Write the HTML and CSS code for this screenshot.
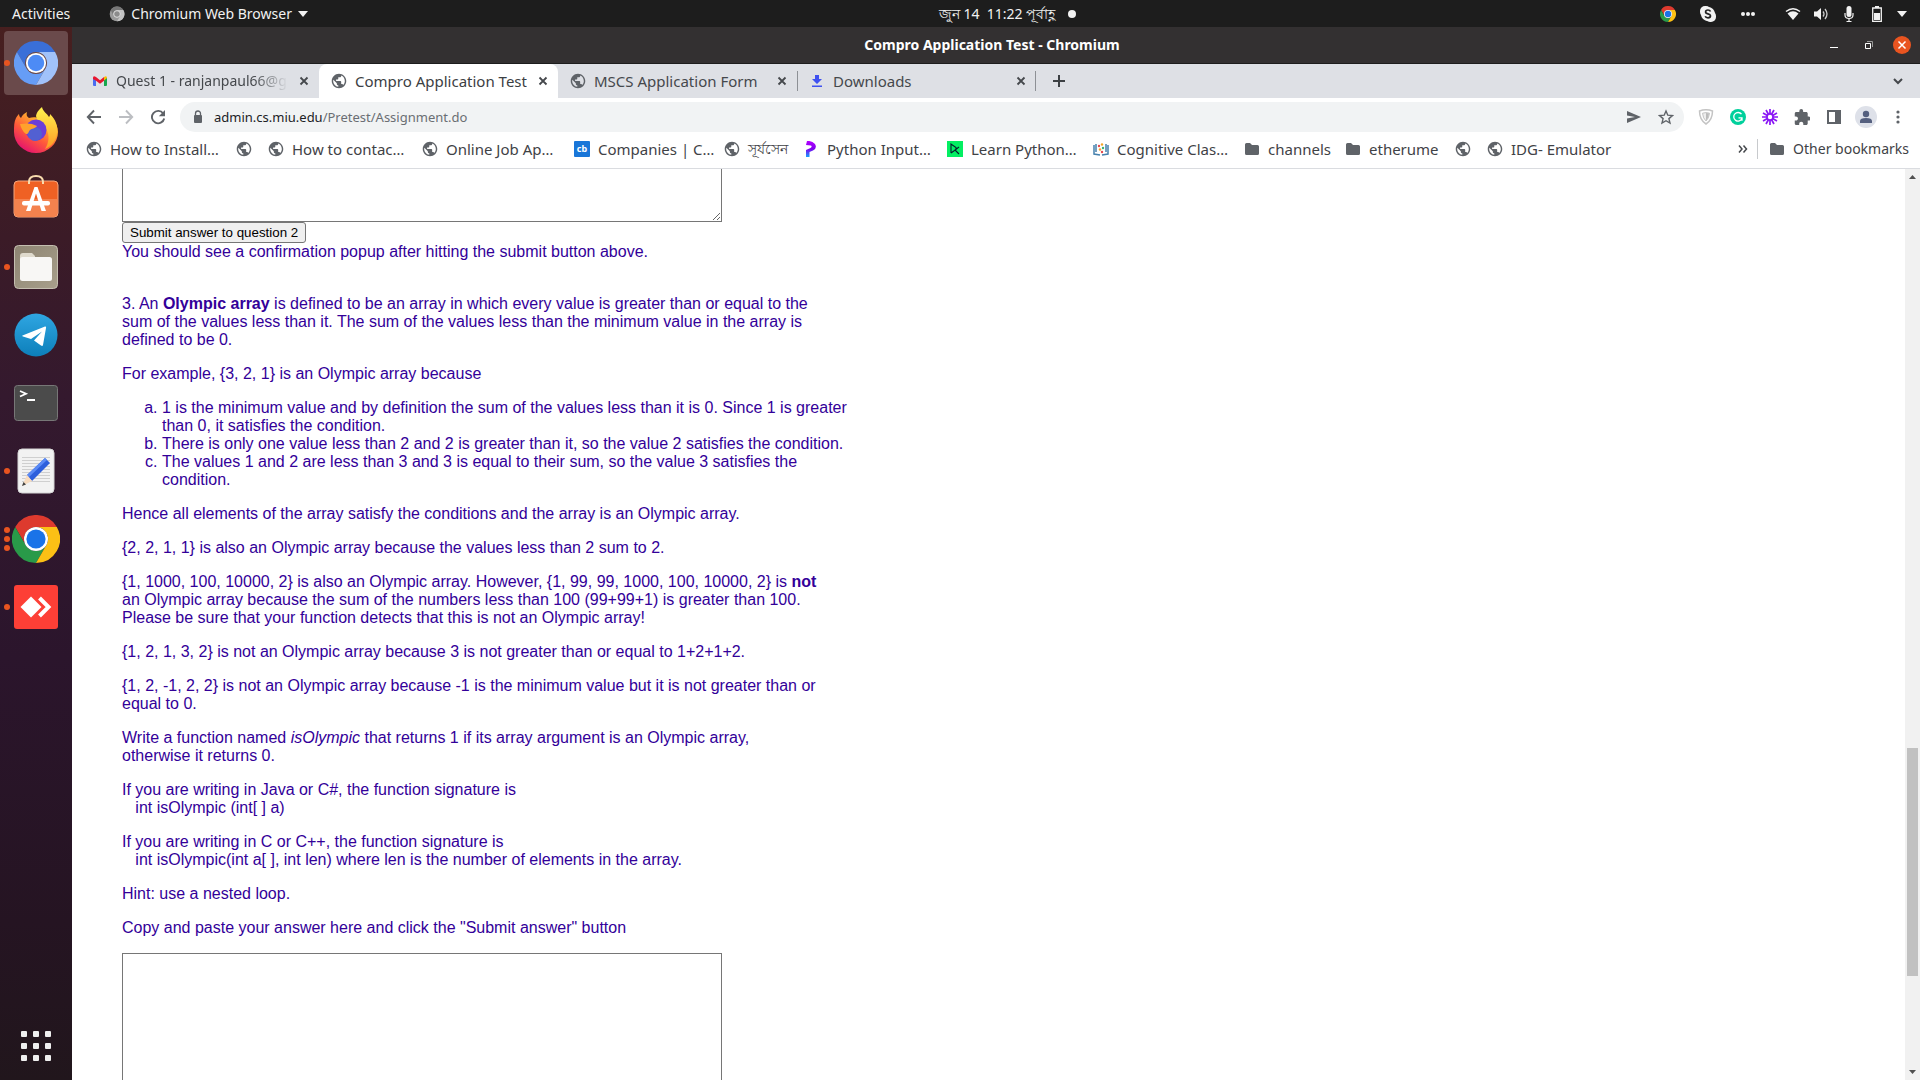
FILE: index.html
```html
<!DOCTYPE html>
<html lang="en">
<head>
<meta charset="utf-8">
<title>Compro Application Test - Chromium</title>
<link rel="stylesheet" href="styles.css">
</head>
<body>
<svg class="defs" aria-hidden="true">
  <defs>
    <linearGradient id="g-tg" x1="0" y1="0" x2="0" y2="1"><stop offset="0" stop-color="#2fa6e2"/><stop offset="1" stop-color="#0d7fba"/></linearGradient>
    <linearGradient id="g-fox" x1="1" y1="0" x2=".3" y2="1"><stop offset="0" stop-color="#fff04a"/><stop offset=".3" stop-color="#ffb82c"/><stop offset=".65" stop-color="#ff5a3a"/><stop offset="1" stop-color="#e5126f"/></linearGradient>
    <linearGradient id="g-tail" x1="0" y1="0" x2="0" y2="1"><stop offset="0" stop-color="#fff44f"/><stop offset="1" stop-color="#ff9a24"/></linearGradient>
    <linearGradient id="g-files" x1="0" y1="0" x2="1" y2="1"><stop offset="0" stop-color="#8d8472"/><stop offset="1" stop-color="#a89f8b"/></linearGradient>
    <linearGradient id="g-py" x1="0" y1="0" x2="0" y2="1"><stop offset="0" stop-color="#b400ff"/><stop offset=".5" stop-color="#8000ee"/><stop offset="1" stop-color="#13a2ff"/></linearGradient>
  </defs>
  <symbol id="globe" viewBox="1 1 22 22"><path fill="#5f6368" d="M12 2C6.480 2 2 6.480 2 12s4.480 10 10 10 10-4.480 10-10S17.520 2 12 2zM11 19.930C7.050 19.440 4 16.080 4 12c0-.62.08-1.210.21-1.790L9 15v1c0 1.100.9 2 2 2zM17.900 17.390C17.640 16.580 16.900 16 16 16h-1v-3c0-.55-.45-1-1-1H8v-2h2c.55 0 1-.45 1-1V7h2c1.100 0 2-.9 2-2v-.41c2.930 1.190 5 4.060 5 7.410 0 2.080-.8 3.970-2.100 5.390z"/></symbol>
  <symbol id="folder" viewBox="0 0 16 16"><path fill="#5f6368" d="M1 3.500q0-1.500 1.500-1.500H6l2 2h5.500Q15 4 15 5.500v7q0 1.500-1.500 1.500h-11Q1 14 1 12.500z"/></symbol>
  <symbol id="close" viewBox="0 0 16 16"><path d="M4.500 4.500l7 7m0-7l-7 7" stroke="#45484c" stroke-width="1.800" fill="none"/></symbol>
  <symbol id="chrome" viewBox="0 0 48 48">
    <path fill="#dd3a2e" d="M24 12H44.800A24 24 0 0 0 3.200 12L13.600 30A12 12 0 0 1 24 12z"/>
    <path fill="#299a49" d="M13.600 30L3.200 12A24 24 0 0 0 24 48L34.400 30A12 12 0 0 1 13.600 30z"/>
    <path fill="#fcc015" d="M34.400 30L24 48A24 24 0 0 0 44.800 12H24A12 12 0 0 1 34.400 30z"/>
    <circle cx="24" cy="24" r="12" fill="#fff"/><circle cx="24" cy="24" r="9.600" fill="#1a73e8"/>
  </symbol>
  <symbol id="chromium" viewBox="0 0 48 48">
    <path fill="#3a6fd8" d="M24 12H44.800A24 24 0 0 0 3.200 12L13.600 30A12 12 0 0 1 24 12z"/>
    <path fill="#669df6" d="M13.600 30L3.200 12A24 24 0 0 0 24 48L34.400 30A12 12 0 0 1 13.600 30z"/>
    <path fill="#a1c2fa" d="M34.400 30L24 48A24 24 0 0 0 44.800 12H24A12 12 0 0 1 34.400 30z"/>
    <circle cx="24" cy="24" r="11" fill="#fff"/><circle cx="24" cy="24" r="9" fill="#4d8bf5"/>
  </symbol>
</svg>

<div class="desktop">
  <header class="topbar">
    <div class="topbar-left">
      <button class="top-btn">Activities</button>
      <button class="top-btn app-menu">
        <svg width="16" height="16" viewBox="0 0 48 48"><circle cx="24" cy="24" r="22" fill="#9a9a9a"/><path fill="#777" d="M24 12H43A22 22 0 0 0 5 12L14 30A12 12 0 0 1 24 12z"/><path fill="#c2c2c2" d="M34 30L24 46A22 22 0 0 0 43 12H24z"/><circle cx="24" cy="24" r="10" fill="#8b8b8b" stroke="#ddd" stroke-width="3"/></svg>
        <span>Chromium Web Browser</span>
        <svg width="10" height="6" viewBox="0 0 10 6"><path fill="#f2f2f2" d="M0 0h10L5 6z"/></svg>
      </button>
    </div>
    <button class="top-btn clock"><span>জুন 14&nbsp; 11:22 পূর্বাহ্ণ</span><i class="dot"></i></button>
    <div class="tray">
      <svg width="16" height="16"><use href="#chrome"/></svg>
      <svg width="16" height="16" viewBox="0 0 16 16"><rect width="11" height="11" rx="5" fill="#f2f2f2"/><rect x="5" y="5" width="11" height="11" rx="5" fill="#f2f2f2"/><circle cx="8" cy="8" r="7" fill="#f2f2f2"/><path d="M10.500 5.500Q9.800 4 8 4 5.600 4 5.600 5.900 5.600 7.300 8 7.800t2.500 2q0 2-2.500 2-2.200 0-2.800-1.600" fill="none" stroke="#222" stroke-width="1.700"/></svg>
      <svg width="16" height="16" viewBox="0 0 16 16"><g fill="#f2f2f2"><circle cx="3" cy="8" r="2"/><circle cx="8" cy="8" r="2"/><circle cx="13" cy="8" r="2"/></g></svg>
      <span class="tray-group">
        <svg width="16" height="16" viewBox="0 0 16 16"><path d="M1 5.500Q8 0 15 5.500" fill="none" stroke="#f2f2f2" stroke-width="1.500"/><path fill="#f2f2f2" d="M2.500 7.500Q8 3 13.500 7.500L8 14z"/></svg>
        <svg width="16" height="16" viewBox="0 0 16 16"><path fill="#f2f2f2" d="M1 5.500h3L8 2v12l-4-3.500H1z"/><path d="M10 5.500q2 2.500 0 5m2-7.500q4 5 0 10" fill="none" stroke="#ccc" stroke-width="1.300"/></svg>
        <svg width="16" height="16" viewBox="0 0 16 16"><rect x="5.500" y="0" width="5" height="11" rx="2.500" fill="#f2f2f2"/><path d="M4 7v2q0 3.500 4 3.500T12 9V7M8 12v3.500M5.500 15.500h5" fill="none" stroke="#f2f2f2" stroke-width="1.200"/></svg>
        <svg width="16" height="16" viewBox="0 0 16 16"><path d="M3.700 2h8.600v13.300H3.700z" fill="none" stroke="#f2f2f2" stroke-width="1.300"/><path fill="#f2f2f2" d="M6 0h4v2H6zM5 7h6v7H5z"/></svg>
        <svg width="10" height="6" viewBox="0 0 10 6"><path fill="#f2f2f2" d="M0 0h10L5 6z"/></svg>
      </span>
    </div>
  </header>

  <div class="workspace">
    <nav class="dock" aria-label="Dock">
      <button class="dock-item active" aria-label="Chromium"><span class="run"><i></i></span><svg width="44" height="44"><use href="#chromium"/></svg></button>
      <button class="dock-item" aria-label="Firefox"><svg width="48" height="48" viewBox="0 2 48 48"><path fill="url(#g-fox)" d="M4 13c1-2 2-3 3-4 0 2 1 3 2 4 1-3 4-5 6-6-1 3 0 5 2 6 3-1 7-1 9 0l14 0c4 5 6 9 6 14A22 21 0 0 1 2 27c0-6 0-10 2-14z"/><path fill="url(#g-tail)" d="M30 2c1 5 5 6 7 10 1-1 1-2 1-3 6 6 8 12 7 19-1 8-6 14-12 16 4-6 5-14 1-20-4-5-9-7-10-13 1-5 4-7 6-9z"/><circle cx="24" cy="25" r="10.500" fill="#6a3fd8"/><circle cx="23" cy="29" r="7" fill="#5260d2"/><path fill="#ffa22c" d="M8 19c6-1 12-1 17 2-2 3-5 2-7 4s-1 4-4 4c-3-2-5-6-6-10z"/></svg></button>
      <button class="dock-item" aria-label="Ubuntu Software"><svg width="48" height="48" viewBox="0 0 48 48"><rect x="2" y="6" width="44" height="36" rx="4" fill="#ef6124" stroke="#f6a77f"/><path fill="#f4824e" d="M3 24h42v14q0 4-4 4H7q-4 0-4-4z"/><path d="M17 9V7q0-6 7-6t7 6v2" fill="none" stroke="#f8dcae" stroke-width="2"/><path d="M22.500 12h3L34 36h-4.500L24 18.500 18.500 36H14z" fill="#fff"/><rect x="10" y="26" width="28" height="4.500" rx="2" fill="#fff"/></svg></button>
      <button class="dock-item" aria-label="Files"><span class="run"><i></i></span><svg width="48" height="48" viewBox="0 0 48 48"><rect x="2.500" y="2.500" width="43" height="43" rx="4" fill="url(#g-files)" stroke="#c4beb0"/><path fill="#dfdacd" d="M8 13q0-3 3-3h9l3 3v6H8z"/><rect x="8" y="14" width="32" height="24" rx="2.500" fill="#f8f7f5"/></svg></button>
      <button class="dock-item" aria-label="Telegram"><svg width="48" height="48" viewBox="0 0 48 48"><circle cx="24" cy="24" r="21.500" fill="url(#g-tg)"/><path fill="#fff" d="M10.500 24.500L33 15.500q1.500-.5 1 1.500L31 34q-.5 1.500-2 .5l-7-5 8-9-11 7.500-8-2.500q-1.500-.5-.5-1z"/></svg></button>
      <button class="dock-item" aria-label="Terminal"><svg width="48" height="48" viewBox="0 0 48 48"><rect x="2.500" y="6.500" width="43" height="35" rx="3" fill="#4b4b4b" stroke="#777"/><path d="M8 12l6 2.700L8 17.500M15 21h8" fill="none" stroke="#fff" stroke-width="1.800"/></svg></button>
      <button class="dock-item" aria-label="Text Editor"><span class="run"><i></i></span><svg width="48" height="48" viewBox="0 0 48 48"><rect x="6" y="2" width="36" height="44" rx="4" fill="#f2f2f2" stroke="#d5d5d5"/><path d="M10 10.500h28M10 13.500h28M10 16.500h28M10 19.500h28M10 22.500h28M10 25.500h28M10 28.500h28M10 31.500h28M10 34.500h28" stroke="#cfcfcf"/><path fill="#2d5fdc" d="M33 11l5 5-18 18-5-6z"/><path fill="#5a8af5" d="M33 11l2 2-18 17-2-2z"/><path fill="#f8dcc0" d="M15 28l5 6-10 5z"/><path fill="#444" d="M11.500 35l2.500 2.500-4 1.500z"/></svg></button>
      <button class="dock-item" aria-label="Google Chrome"><span class="run"><i></i><i></i><i></i></span><svg width="48" height="48"><use href="#chrome"/></svg></button>
      <button class="dock-item" aria-label="AnyDesk"><span class="run"><i></i></span><svg width="48" height="48" viewBox="0 0 48 48"><rect x="2" y="2" width="44" height="44" rx="3" fill="#fd3f36"/><path fill="#fff" d="M19 13.500L29.500 24 19 34.500 8.500 24z"/><path d="M27.500 15l9 9-9 9" fill="none" stroke="#fff" stroke-width="4"/></svg></button>
      <button class="dock-item apps" aria-label="Show Applications"><svg width="30" height="30" viewBox="0 0 30 30"><g fill="#efefef"><rect width="6" height="6" rx="1"/><rect x="12" width="6" height="6" rx="1"/><rect x="24" width="6" height="6" rx="1"/><rect y="12" width="6" height="6" rx="1"/><rect x="12" y="12" width="6" height="6" rx="1"/><rect x="24" y="12" width="6" height="6" rx="1"/><rect y="24" width="6" height="6" rx="1"/><rect x="12" y="24" width="6" height="6" rx="1"/><rect x="24" y="24" width="6" height="6" rx="1"/></g></svg></button>
    </nav>

    <section class="window">
      <div class="titlebar">
        <h1>Compro Application Test - Chromium</h1>
        <div class="win-controls">
          <button aria-label="Minimize"><svg width="20" height="20" viewBox="0 0 20 20"><path fill="#fff" d="M6 12h8v1H6z"/></svg></button>
          <button aria-label="Restore"><svg width="20" height="20" viewBox="0 0 20 20"><path d="M7.500 8.500h5v5h-5z" fill="none" stroke="#fff"/><path d="M9 6.500h5.500V12" fill="none" stroke="#999"/></svg></button>
          <button aria-label="Close"><svg width="20" height="20" viewBox="0 0 20 20"><circle cx="10" cy="10" r="9" fill="#e95420"/><path d="M6.500 6.500l7 7m0-7l-7 7" stroke="#fff" stroke-width="1.500"/></svg></button>
        </div>
      </div>

      <div class="tabstrip">
        <div class="tab"><svg width="16" height="16" viewBox="0 0 16 16"><path fill="#4a6cf0" d="M1 4.500l3 2.300V13H2q-1 0-1-1z"/><path fill="#19a74e" d="M15 4.500l-3 2.300V13h2q1 0 1-1z"/><path fill="#fbbc04" d="M12 4q3-2 3 1l-3 2.500z"/><path fill="#e8162e" d="M1 5q0-3 3-1l4 3.200L12 4v3.800l-4 3-4-3L1 6z"/></svg><span class="tab-title fade">Quest 1 - ranjanpaul66@g</span><button aria-label="Close tab"><svg width="16" height="16"><use href="#close"/></svg></button></div>
        <div class="tab current"><svg width="16" height="16"><use href="#globe"/></svg><span class="tab-title">Compro Application Test</span><button aria-label="Close tab"><svg width="16" height="16"><use href="#close"/></svg></button></div>
        <div class="tab"><svg width="16" height="16"><use href="#globe"/></svg><span class="tab-title">MSCS Application Form</span><button aria-label="Close tab"><svg width="16" height="16"><use href="#close"/></svg></button></div>
        <div class="tab ruled"><svg width="16" height="16" viewBox="0 0 16 16"><path fill="#3f51f0" d="M6 2h4v4h3l-5 5-5-5h3zM3 12.500h10V14H3z"/></svg><span class="tab-title">Downloads</span><button aria-label="Close tab"><svg width="16" height="16"><use href="#close"/></svg></button></div>
        <button class="new-tab" aria-label="New tab"><svg width="16" height="16" viewBox="0 0 16 16"><path d="M8 2v12M2 8h12" stroke="#3c4043" stroke-width="2"/></svg></button>
        <button class="tab-search" aria-label="Search tabs"><svg width="16" height="16" viewBox="0 0 16 16"><path d="M4 6l4 4 4-4" fill="none" stroke="#45484c" stroke-width="2"/></svg></button>
      </div>

      <div class="toolbar">
        <button class="tool" aria-label="Back"><svg width="16" height="16" viewBox="0 0 16 16"><path d="M15 8H2M8 1.500L1.800 8 8 14.500" fill="none" stroke="#5f6368" stroke-width="1.900"/></svg></button>
        <button class="tool" aria-label="Forward"><svg width="16" height="16" viewBox="0 0 16 16"><path d="M1 8h13M8 1.500L14.200 8 8 14.500" fill="none" stroke="#bcbec2" stroke-width="1.900"/></svg></button>
        <button class="tool" aria-label="Reload"><svg width="16" height="16" viewBox="0 0 16 16"><path d="M13.200 4.500A6.200 6.200 0 1 0 14.200 9.500" fill="none" stroke="#5f6368" stroke-width="1.900"/><path fill="#5f6368" d="M15 1v6.200H8.800z"/></svg></button>
        <div class="omnibox">
          <svg width="16" height="16" viewBox="0 0 16 16"><rect x="4" y="6" width="8" height="8" rx="1" fill="#5f6368"/><path d="M5.500 7V4.500a2.500 2.500 0 0 1 5 0V7" fill="none" stroke="#5f6368" stroke-width="1.300"/></svg>
          <a class="url" href="#answer3"><span>admin.cs.miu.edu</span>/Pretest/Assignment.do</a>
          <button class="tool" aria-label="Share"><svg width="16" height="16" viewBox="0 0 16 16"><path fill="#5f6368" d="M1 2l14 6L1 14V9.500L9 8 1 6.500z"/></svg></button>
          <button class="tool" aria-label="Bookmark this page"><svg width="16" height="16" viewBox="0 0 16 16"><path d="M8 2l1.800 4.200 4.600.4-3.500 3 1.100 4.500L8 11.700l-4 2.400 1.100-4.500-3.500-3 4.600-.4z" fill="none" stroke="#5f6368" stroke-width="1.400"/></svg></button>
        </div>
        <button class="tool" aria-label="Shield"><svg width="16" height="16" viewBox="0 0 16 16"><path d="M1.500 2Q8-.5 14.500 2 14.500 11 8 15 1.500 11 1.500 2z" fill="none" stroke="#c4c4c4" stroke-width="1.500"/><path d="M4.500 4.200Q8 3 11.500 4.200 11 9.500 8 12 5 9.500 4.500 4.200z" fill="#eee" stroke="#c4c4c4"/><path fill="#bbb" d="M8 4v7.500Q10.500 9 11 4.500z"/></svg></button>
        <button class="tool" aria-label="Grammarly"><svg width="16" height="16" viewBox="0 0 16 16"><circle cx="8" cy="8" r="8" fill="#00d09c"/><path d="M11.500 5.200A4.300 4.300 0 1 0 12 9.500M8.500 8.800H12v3" fill="none" stroke="#fff" stroke-width="1.300"/></svg></button>
        <button class="tool" aria-label="Loom"><svg width="16" height="16" viewBox="0 0 16 16"><path d="M8 0v16M0 8h16M1 4l14 8M1 12L15 4M4 1l8 14M12 1L4 15" stroke="#8a16f5" stroke-width="1.700"/><circle cx="8" cy="8" r="3" fill="#fff" stroke="#8a16f5" stroke-width="1.600"/></svg></button>
        <button class="tool" aria-label="Extensions"><svg width="16" height="16" viewBox="1 1 21 21"><path fill="#5f6368" d="M20.500 11H19V7c0-1.100-.9-2-2-2h-4V3.500a2.500 2.500 0 0 0-5 0V5H4c-1.100 0-2 .9-2 2v3.800h1.500c1.500 0 2.700 1.200 2.700 2.700s-1.200 2.700-2.700 2.700H2V20c0 1.100.9 2 2 2h3.800v-1.500c0-1.500 1.200-2.700 2.700-2.700s2.700 1.200 2.700 2.700V22H17c1.100 0 2-.9 2-2v-4h1.500a2.500 2.500 0 0 0 0-5z"/></svg></button>
        <button class="tool" aria-label="Side panel"><svg width="16" height="16" viewBox="0 0 16 16"><path fill="#5f6368" fill-rule="evenodd" d="M1 1h14v14H1zM3 3v10h6V3z"/></svg></button>
        <button class="tool avatar" aria-label="Profile"><svg width="22" height="22" viewBox="0 0 22 22"><circle cx="11" cy="11" r="11" fill="#dee1e9"/><circle cx="11" cy="8" r="3.200" fill="#55607f"/><path fill="#55607f" d="M5 17v-2q0-3 6-3t6 3v2z"/></svg></button>
        <button class="tool" aria-label="Menu"><svg width="16" height="16" viewBox="0 0 16 16"><g fill="#5f6368"><circle cx="8" cy="3" r="1.600"/><circle cx="8" cy="8" r="1.600"/><circle cx="8" cy="13" r="1.600"/></g></svg></button>
      </div>

      <nav class="bookmarks" aria-label="Bookmarks">
        <div class="bookmark-list">
          <a href="#"><svg width="16" height="16"><use href="#globe"/></svg>How to Install…</a>
          <a href="#" aria-label="Untitled bookmark"><svg width="16" height="16"><use href="#globe"/></svg></a>
          <a href="#"><svg width="16" height="16"><use href="#globe"/></svg>How to contac…</a>
          <a href="#"><svg width="16" height="16"><use href="#globe"/></svg>Online Job Ap…</a>
          <a href="#"><span class="cb">cb</span>Companies | C…</a>
          <a href="#"><svg width="16" height="16"><use href="#globe"/></svg><span class="small">সূর্যসেন</span></a>
          <a href="#"><svg width="16" height="16" viewBox="0 0 16 16"><path d="M4 0q5-.5 8 3 2.500 4-2 6.500L6.500 11v5H3V9l4.500-2q2-1.200.5-2.500L3 4z" fill="url(#g-py)"/></svg>Python Input…</a>
          <a href="#"><svg width="16" height="16" viewBox="0 0 16 16"><path fill="#03ef62" d="M0 0h16v16H0z"/><path d="M4 12V3l5 3.500v2L4 12M12 6L8 9l4 4" fill="none" stroke="#05192d" stroke-width="1.100"/></svg>Learn Python…</a>
          <a href="#"><svg width="16" height="16" viewBox="0 0 16 16"><path d="M1 4v9l6 1M15 4v9l-6 1M3 3v8m10-8v8" fill="none" stroke="#4681ad" stroke-width="1.500"/><circle cx="6" cy="5" r="1.200" fill="#e5484d"/><circle cx="9" cy="3.500" r="1.200" fill="#f5a623"/><circle cx="10" cy="7" r="1.200" fill="#3bb273"/><circle cx="7" cy="8.500" r="1.200" fill="#f5a623"/><circle cx="9" cy="11" r="1.200" fill="#e5484d"/></svg>Cognitive Clas…</a>
          <a href="#"><svg width="16" height="16"><use href="#folder"/></svg>channels</a>
          <a href="#"><svg width="16" height="16"><use href="#folder"/></svg>etherume</a>
          <a href="#" aria-label="Untitled bookmark"><svg width="16" height="16"><use href="#globe"/></svg></a>
          <a href="#"><svg width="16" height="16"><use href="#globe"/></svg>IDG- Emulator</a>
        </div>
        <button class="more" aria-label="More bookmarks"><svg width="10" height="10" viewBox="0 0 10 10"><path d="M1 1.500L4 5 1 8.500M5.500 1.500l3 3.500-3 3.500" fill="none" stroke="#45484c" stroke-width="1.500"/></svg></button>
        <a class="other small" href="#"><svg width="16" height="16"><use href="#folder"/></svg>Other bookmarks</a>
      </nav>

      <div class="viewport">
        <main class="page">
          <textarea class="answer scrolled" aria-label="Answer to question 2"></textarea>
          <button class="submit">Submit answer to question 2</button>
          <div class="note">You should see a confirmation popup after hitting the submit button above.</div>

          <p>3. An <b>Olympic array</b> is defined to be an array in which every value is greater than or equal to the sum of the values less than it. The sum of the values less than the minimum value in the array is defined to be 0.</p>
          <p>For example, {3, 2, 1} is an Olympic array because</p>
          <ol>
            <li>1 is the minimum value and by definition the sum of the values less than it is 0. Since 1 is greater than 0, it satisfies the condition.</li>
            <li>There is only one value less than 2 and 2 is greater than it, so the value 2 satisfies the condition.</li>
            <li>The values 1 and 2 are less than 3 and 3 is equal to their sum, so the value 3 satisfies the condition.</li>
          </ol>
          <p>Hence all elements of the array satisfy the conditions and the array is an Olympic array.</p>
          <p>{2, 2, 1, 1} is also an Olympic array because the values less than 2 sum to 2.</p>
          <p>{1, 1000, 100, 10000, 2} is also an Olympic array. However, {1, 99, 99, 1000, 100, 10000, 2} is <b>not</b><br>an Olympic array because the sum of the numbers less than 100 (99+99+1) is greater than 100.<br>Please be sure that your function detects that this is not an Olympic array!</p>
          <p>{1, 2, 1, 3, 2} is not an Olympic array because 3 is not greater than or equal to 1+2+1+2.</p>
          <p>{1, 2, -1, 2, 2} is not an Olympic array because -1 is the minimum value but it is not greater than or equal to 0.</p>
          <p>Write a function named <i>isOlympic</i> that returns 1 if its array argument is an Olympic array,<br>otherwise it returns 0.</p>
          <p>If you are writing in Java or C#, the function signature is<br>&nbsp;&nbsp; int isOlympic (int[ ] a)</p>
          <p>If you are writing in C or C++, the function signature is<br>&nbsp;&nbsp; int isOlympic(int a[ ], int len) where len is the number of elements in the array.</p>
          <p>Hint: use a nested loop.</p>
          <p><label for="answer3">Copy and paste your answer here and click the "Submit answer" button</label></p>
          <textarea class="answer" id="answer3"></textarea>
        </main>
        <div class="scrollbar" aria-hidden="true">
          <svg width="15" height="17" viewBox="0 0 15 17"><path fill="#505050" d="M4 10h7L7.500 6z"/></svg>
          <div class="track"><i class="before"></i><i class="thumb"></i><i class="after"></i></div>
          <svg width="15" height="17" viewBox="0 0 15 17"><path fill="#505050" d="M4 7h7l-3.500 4z"/></svg>
        </div>
      </div>
    </section>
  </div>
</div>
</body>
</html>
```

FILE: styles.css
```css
* { box-sizing: border-box; }

body {
  margin: 0;
  font-family: "Noto Sans", "Open Sans", sans-serif;
  font-size: 14px;
  line-height: 20px;
  overflow: hidden;
}

button {
  margin: 0;
  padding: 0;
  border: 0;
  background: none;
  font: inherit;
  color: inherit;
}

svg { display: block; flex: none; }
.defs { position: absolute; width: 0; height: 0; }
a { color: inherit; text-decoration: none; }

.desktop { display: flex; flex-direction: column; height: 100vh; }

/* GNOME top bar */
.topbar {
  display: grid;
  grid-template-columns: 1fr auto 1fr;
  align-items: center;
  height: 27px;
  padding: 0 13px 0 12px;
  background: #1d1d1d;
  color: #f2f2f2;
}
.topbar-left { display: flex; gap: 39px; }
.top-btn { display: flex; align-items: center; }
.app-menu { gap: 6px; }
.clock { gap: 13px; margin-left: 96px; }
.dot { width: 8px; height: 8px; border-radius: 50%; background: #f2f2f2; }
.tray { display: flex; justify-content: flex-end; align-items: center; gap: 24px; }
.tray-group { display: flex; align-items: center; gap: 12px; margin-left: 5px; }

.workspace { display: flex; flex: 1; min-height: 0; }

/* Dock */
.dock {
  display: flex;
  flex-direction: column;
  align-items: center;
  gap: 4px;
  width: 72px;
  padding: 4px 0 2px;
  background: linear-gradient(#471f1f 0, #3b1b27 20%, #34192e 35%, #2b152c 60%, #251422 85%, #21161c);
}
.dock-item {
  position: relative;
  display: flex;
  align-items: center;
  justify-content: center;
  width: 64px;
  height: 64px;
  border-radius: 4px;
}
.dock-item.active { background: #6a4a4b; }
.dock-item.apps { margin-top: auto; }
.run {
  position: absolute;
  left: 0;
  top: 0;
  bottom: 0;
  display: flex;
  flex-direction: column;
  justify-content: center;
  gap: 3px;
}
.run i { width: 6px; height: 6px; border-radius: 50%; background: #e95420; }

/* Browser window */
.window { display: flex; flex-direction: column; flex: 1; min-width: 0; background: #fff; }

.titlebar {
  display: grid;
  grid-template-columns: 1fr auto 1fr;
  align-items: center;
  height: 37px;
  padding-right: 8px;
  border-bottom: 1px solid #1d1d1d;
  background: #333031;
  color: #fff;
}
.titlebar h1 { grid-column: 2; margin: 0; font-size: 14px; line-height: 20px; }
.win-controls { display: flex; justify-content: flex-end; gap: 14px; }

.tabstrip {
  display: flex;
  align-items: center;
  height: 34px;
  padding: 0 14px 0 8px;
  background: #dee0e5;
  color: #45484c;
  font-size: 15px;
}
.tab {
  display: flex;
  align-items: center;
  gap: 8px;
  width: 239px;
  height: 34px;
  padding: 0 7px 0 12px;
}
.tab.current { border-radius: 8px 8px 0 0; background: #fff; color: #3c4043; }
.tab.ruled {
  background:
    linear-gradient(#8d9095, #8d9095) left center / 1px 20px no-repeat,
    linear-gradient(#8d9095, #8d9095) right center / 1px 20px no-repeat;
}
.tab-title { flex: 1; min-width: 0; overflow: hidden; white-space: nowrap; }
.fade {
  font-size: 14px;
  -webkit-mask-image: linear-gradient(90deg, #000 80%, transparent);
  mask-image: linear-gradient(90deg, #000 80%, transparent);
}
.new-tab { margin-left: 15px; }
.tab-search { margin-left: auto; }

.toolbar {
  display: flex;
  align-items: center;
  height: 38px;
  padding: 0 6px;
}
.tool { display: flex; align-items: center; justify-content: center; width: 32px; height: 30px; flex: none; }
.omnibox {
  display: flex;
  align-items: center;
  flex: 1;
  height: 30px;
  margin: 0 6px;
  padding: 0 2px 0 10px;
  border-radius: 15px;
  background: #f1f3f4;
}
.url { flex: 1; margin-left: 8px; color: #6a6e73; font-size: 13px; }
.url span { color: #202124; }

.bookmarks {
  display: flex;
  align-items: center;
  height: 33px;
  padding: 0 11px 6px 14px;
  border-bottom: 1px solid #dadce0;
  color: #3f4246;
  font-size: 15px;
  white-space: nowrap;
}
.bookmarks a { display: flex; align-items: center; gap: 8px; }
.bookmark-list {
  display: grid;
  grid-template-columns: 150px 32px 154px 152px 150px 79px 144px 146px 151px 101px 110px 32px auto;
}
.bookmarks .small { font-size: 14px; }
.cb {
  width: 16px;
  height: 16px;
  border-radius: 1px;
  background: #1976d8;
  color: #fff;
  font-size: 9px;
  font-weight: 700;
  line-height: 15px;
  text-align: center;
}
.more { margin-left: auto; margin-right: 9px; }
.other { padding-left: 11px; border-left: 1px solid #c8cacd; }

/* Web page */
.viewport { display: flex; flex: 1; min-height: 0; overflow: hidden; }
.page {
  flex: 1;
  min-width: 0;
  padding-left: 50px;
  overflow: hidden;
  color: #330099;
  font-family: "Liberation Sans", Arial, sans-serif;
  font-size: 16px;
  line-height: 18px;
}
.page p { max-width: 700px; margin: 16px 0; }
.page ol { max-width: 730px; margin: 16px 0; padding-left: 40px; list-style: lower-alpha; }
.note { margin-bottom: 34px; }
.answer {
  display: block;
  width: 600px;
  height: 180px;
  margin: 0;
  border: 1px solid #767676;
  background: #fff;
}
.answer.scrolled { height: 53px; border-top: 0; }
.submit {
  display: block;
  height: 21px;
  padding: 1px 7px;
  border: 1px solid #767676;
  border-radius: 3px;
  background: #efefef;
  color: #000;
  font: revert;
}

.scrollbar { display: flex; flex-direction: column; width: 15px; background: #f1f1f1; }
.track { display: flex; flex-direction: column; flex: 1; padding: 0 2px; }
.before { flex: 562; }
.thumb { flex: 228; background: #c1c1c1; }
.after { flex: 87; }
```
